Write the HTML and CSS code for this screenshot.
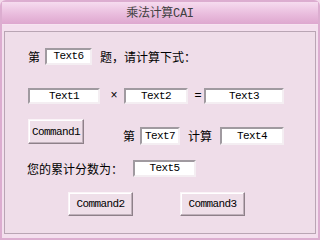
FILE: index.html
```html
<!DOCTYPE html>
<html lang="zh-CN">
<head>
    <meta charset="UTF-8">
    <title>乘法计算CAI</title>
    <link rel="stylesheet" href="styles.css">
</head>
<body>
    <div class="window">
        <div class="titlebar">乘法计算CAI</div>
        <div class="panel">
            <div class="row row-question">
                <span class="label">第</span>
                <span class="textbox box-num">Text6</span>
                <span class="label label-ask">题，请计算下式：</span>
            </div>
            <div class="row row-formula">
                <span class="textbox box-a">Text1</span>
                <span class="op op-times">×</span>
                <span class="textbox box-b">Text2</span>
                <span class="op op-equals">=</span>
                <span class="textbox box-c">Text3</span>
            </div>
            <div class="row row-check">
                <button class="cmd cmd-1">Command1</button>
                <div class="count-group">
                    <span class="label">第</span>
                    <span class="textbox box-count">Text7</span>
                    <span class="label label-calc">计算</span>
                    <span class="textbox box-result">Text4</span>
                </div>
            </div>
            <div class="row row-score">
                <span class="label">您的累计分数为：</span>
                <span class="textbox box-score">Text5</span>
            </div>
            <div class="row row-actions">
                <button class="cmd cmd-2">Command2</button>
                <button class="cmd cmd-3">Command3</button>
            </div>
        </div>
    </div>
</body>
</html>
```

FILE: styles.css
```css
body {
    margin: 0;
    width: 320px;
    height: 240px;
    overflow: hidden;
    background-color: #f3dbeb;
    font-family: "Noto Sans CJK SC", sans-serif;
}
.window {
    width: 320px;
    height: 240px;
    box-sizing: border-box;
    border: 2px solid #dcadd0;
    border-radius: 6px 6px 0 0;
    background-color: #f4dfee;
    padding: 0 2px 4px 2px;
}
.titlebar {
    height: 23px;
    box-sizing: border-box;
    margin: 0 -2px;
    padding-top: 2px;
    background: linear-gradient(to bottom, #f6dcef, #e9bcdd 55%, #dea7cf);
    border-bottom: 1px solid #f7e4f1;
    color: #404040;
    font-family: "Liberation Mono", "Noto Sans CJK SC", monospace;
    font-size: 12px;
    line-height: 20px;
    text-align: center;
    letter-spacing: -0.3px;
}
.panel {
    margin-top: 6px;
    height: 203px;
    box-sizing: border-box;
    border: 1px solid #b9a5b4;
    background-color: #efdde9;
    padding-left: 23px;
}
.row {
    display: flex;
    align-items: center;
}
.label {
    font-size: 12px;
    line-height: 14px;
    color: #000;
}
.textbox {
    display: inline-block;
    box-sizing: border-box;
    height: 17px;
    background-color: #fff;
    border: 2px solid;
    border-color: #a09aa0 #f4eef2 #f4eef2 #a09aa0;
    font-family: "Liberation Mono", monospace;
    font-size: 11px;
    letter-spacing: -0.6px;
    line-height: 13px;
    text-align: center;
    color: #000;
}
.op {
    font-family: "Liberation Sans", sans-serif;
    font-size: 12px;
    text-align: center;
    margin-top: -3px;
}
.cmd {
    box-sizing: border-box;
    padding: 0;
    background-color: #efdfe9;
    border: 1px solid;
    border-color: #fbf4f8 #8e8089 #8e8089 #fbf4f8;
    box-shadow: inset -1px -1px 0 #bfb0ba, inset 1px 1px 0 #fff;
    font-family: "Liberation Mono", monospace;
    font-size: 11px;
    letter-spacing: -0.6px;
    color: #000;
}

.row-question { margin-top: 16px; height: 17px; }
.box-num { width: 47px; margin-left: 5px; }
.label-ask { margin-left: 8px; }

.row-formula { margin-top: 23px; height: 16px; }
.row-formula .textbox { height: 16px; line-height: 12px; }
.box-a { width: 72px; }
.op-times { width: 20px; margin-left: 4px; }
.box-b { width: 64px; }
.op-equals { width: 16px; padding-left: 4px; box-sizing: border-box; }
.box-c { width: 80px; }

.row-check { margin-top: 15px; align-items: flex-start; height: 26px; }
.cmd-1 { width: 56px; height: 25px; }
.count-group {
    display: flex;
    align-items: center;
    margin-top: 8px;
    height: 18px;
}
.count-group .label { margin-left: 39px; }
.count-group .textbox { height: 18px; line-height: 14px; }
.box-count { width: 40px; margin-left: 5px; }
.count-group .label-calc { margin-left: 8px; }
.box-result { width: 64px; margin-left: 8px; }

.row-score { margin-top: 15px; height: 17px; }
.row-score .label { margin-left: -1px; }
.box-score { width: 63px; margin-left: 10px; }

.row-actions { margin-top: 15px; }
.cmd-2, .cmd-3 { width: 65px; height: 24px; }
.cmd-2 { margin-left: 40px; }
.cmd-3 { margin-left: 47px; }
```
